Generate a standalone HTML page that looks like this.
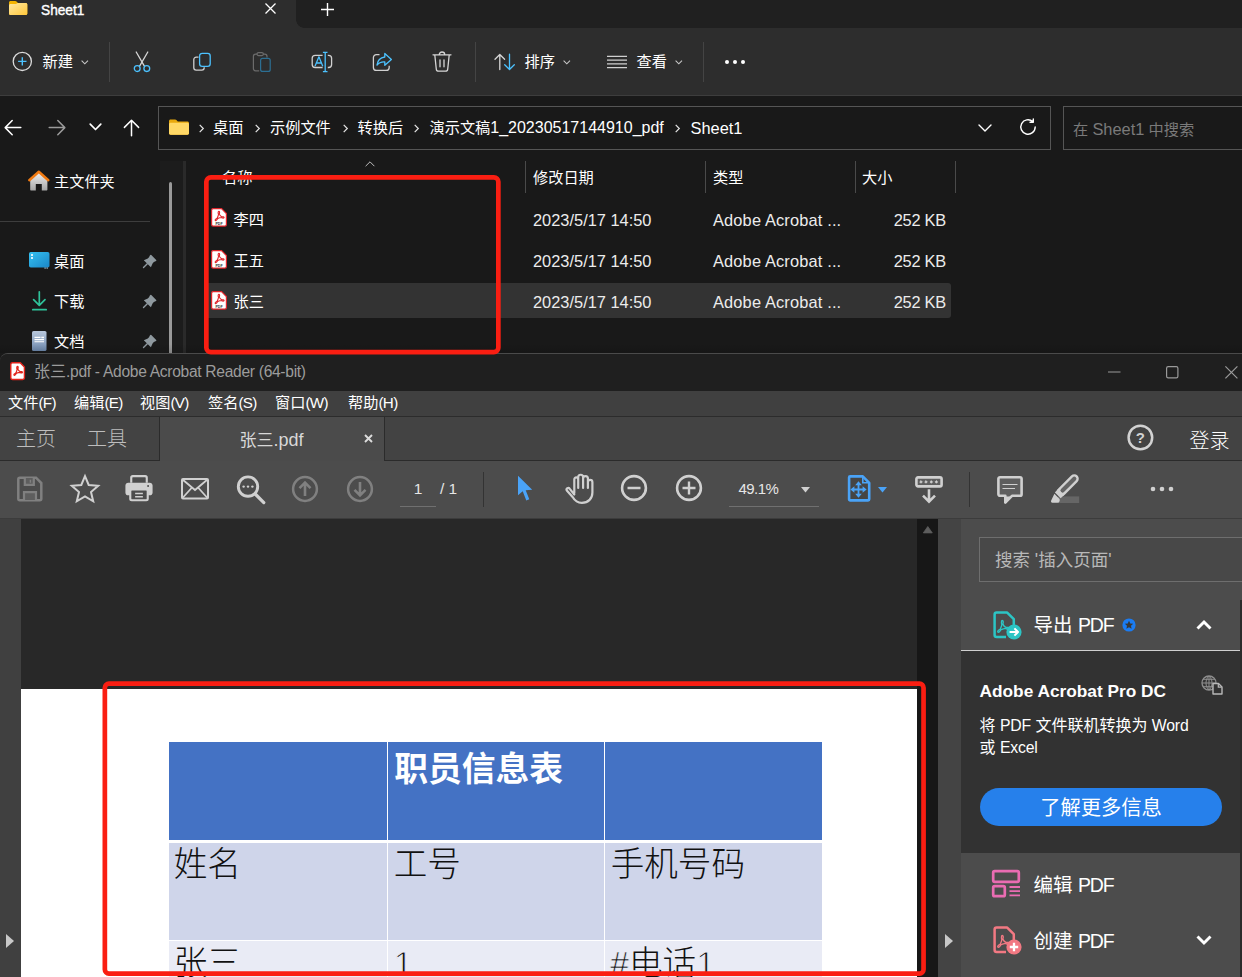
<!DOCTYPE html>
<html lang="zh-CN">
<head>
<meta charset="utf-8">
<title>Sheet1</title>
<style>
*{box-sizing:border-box;margin:0;padding:0}
html,body{width:1242px;height:977px;overflow:hidden;background:#191919}
body{position:relative;font-family:"Liberation Sans","Noto Sans CJK SC",sans-serif;color:#fff;font-size:15px;-webkit-font-smoothing:antialiased}
.abs{position:absolute}
.t{position:absolute;white-space:nowrap;line-height:20px;height:20px}
svg{position:absolute;overflow:visible}
/* ---------- Explorer ---------- */
#ex{position:absolute;left:0;top:0;width:1242px;height:353px;background:#191919;overflow:hidden}
#ex-title{position:absolute;left:0;top:0;width:1242px;height:28px;background:#202020}
#ex-tab{position:absolute;left:0;top:-8px;width:296px;height:36px;background:#2d2d2d;border-radius:0 8px 0 0}
#ex-tool{position:absolute;left:0;top:28px;width:1242px;height:68px;background:#2d2d2d;border-bottom:1px solid #3d3d3d}
.vsep{position:absolute;width:1px;background:#444}
#addr{position:absolute;left:158px;top:106px;width:893px;height:44px;border:1px solid #555;background:#191919}
#srch{position:absolute;left:1063px;top:106px;width:200px;height:44px;border:1px solid #555;background:#191919}
.l{font-size:16.400px}
.crumb{font-size:17px;color:#e0e0e0;width:10px;text-align:center}
.hsep{top:161px;width:1px;height:32px;background:#4a4a4a}
/* ---------- Acrobat ---------- */
#ac{position:absolute;left:0;top:353px;width:1242px;height:624px;background:#272727;overflow:hidden;border-top:1px solid #4a4a4a;border-radius:8px 0 0 0}
.menu{top:39px;font-size:15.200px;color:#fff}
.ml{font-size:15.200px;letter-spacing:-.6px}
.pg{font-size:33.600px;font-weight:300;color:#111;line-height:40px;height:40px}
.big{font-size:19.500px;line-height:24px;height:24px}
.bl{font-size:19.500px;letter-spacing:-1.100px}
.dl{font-size:15.800px;letter-spacing:-.2px}
.thin{-webkit-text-stroke:1px #e9ebf5}
</style>
</head>
<body>
<!-- ================= EXPLORER ================= -->
<div id="ex">
  <div id="ex-title"></div>
  <div id="ex-tab"></div>
  <div class="abs" style="left:296px;top:20px;width:8px;height:8px;background:radial-gradient(circle at 100% 0,#202020 7.5px,#2d2d2d 8px)"></div>
  <!-- tab folder icon -->
  <svg style="left:9px;top:1px" width="19" height="15" viewBox="0 0 19 15">
    <defs><linearGradient id="gf" x1="0" y1="0" x2="1" y2="1"><stop offset="0" stop-color="#ffe9a2"/><stop offset="1" stop-color="#ffc73a"/></linearGradient></defs>
    <path d="M0 1.500C0 .7.700 0 1.500 0h4.800c.5 0 .9.200 1.200.5L9 2h7.800c.8 0 1.500.7 1.500 1.500v9c0 .8-.7 1.500-1.500 1.500H1.500C.7 14 0 13.300 0 12.500z" fill="#f4b400"/>
    <path d="M0 4.600c0-.8.700-1.500 1.500-1.500h5.200c.5 0 .9-.2 1.200-.5l.6-.6h8.300c.8 0 1.500.7 1.500 1.500v9c0 .8-.7 1.500-1.500 1.500H1.500C.7 14 0 13.300 0 12.500z" fill="url(#gf)"/>
  </svg>
  <div class="t" style="left:40.500px;top:-.200px;font-size:14.800px;-webkit-text-stroke:.4px #fff;transform:scaleX(.925);transform-origin:0 50%">Sheet1</div>
  <svg style="left:265px;top:3px" width="11" height="11" viewBox="0 0 11 11"><path d="M.5.5l10 10M10.500.5l-10 10" stroke="#fff" stroke-width="1.300" fill="none"/></svg>
  <svg style="left:321px;top:3px" width="13" height="13" viewBox="0 0 13 13"><path d="M6.500 0v13M0 6.500h13" stroke="#fff" stroke-width="1.400" fill="none"/></svg>

  <div id="ex-tool"></div>
  <!-- new -->
  <svg style="left:12px;top:51px" width="21" height="21" viewBox="0 0 21 21"><circle cx="10.300" cy="10.400" r="9.100" fill="none" stroke="#dcdcdc" stroke-width="1.300"/><path d="M10.300 6.200v8.400M6.100 10.400h8.400" stroke="#4cc2ff" stroke-width="1.400" fill="none"/></svg>
  <div class="t" style="left:42.500px;top:52px;font-size:15.200px">新建</div>
  <svg style="left:80.500px;top:60px" width="8" height="5" viewBox="0 0 8 5"><path d="M.6.600L3.800 3.800 7 .6" stroke="#c8c8c8" stroke-width="1.100" fill="none"/></svg>
  <div class="vsep" style="left:109px;top:42px;height:40px"></div>
  <!-- cut -->
  <svg style="left:132px;top:51px" width="20" height="22" viewBox="0 0 20 22">
    <path d="M4.200 1L12.400 15.200M15.800 1L7.600 15.200" stroke="#d6d6d6" stroke-width="1.300" fill="none" stroke-linecap="round"/>
    <circle cx="5.200" cy="17.600" r="2.900" fill="none" stroke="#4cc2ff" stroke-width="1.300"/><circle cx="14.800" cy="17.600" r="2.900" fill="none" stroke="#4cc2ff" stroke-width="1.300"/>
  </svg>
  <!-- copy -->
  <svg style="left:192px;top:52px" width="20" height="20" viewBox="0 0 20 20">
    <path d="M6.500 5.200H4.200c-1.300 0-2.400 1.100-2.400 2.400v8.200c0 1.300 1.100 2.400 2.400 2.400h5.600c1.300 0 2.400-1.100 2.400-2.400v-.6" fill="none" stroke="#d0d0d0" stroke-width="1.300"/>
    <rect x="7.600" y="1.300" width="10.600" height="13" rx="2.600" fill="none" stroke="#4cc2ff" stroke-width="1.300"/>
  </svg>
  <!-- paste (disabled) -->
  <svg style="left:252px;top:51px" width="20" height="22" viewBox="0 0 20 22">
    <path d="M5 3.200H3.600c-1.200 0-2.200 1-2.200 2.200v12.200c0 1.200 1 2.200 2.200 2.200h3.600M11.400 3.200h1.400c1.200 0 2.200 1 2.200 2.200v1" fill="none" stroke="#6b6b6b" stroke-width="1.200"/>
    <rect x="5" y="1.600" width="6.400" height="3" rx="1.500" fill="none" stroke="#6b6b6b" stroke-width="1.200"/>
    <rect x="8.600" y="7.400" width="9.600" height="13" rx="2" fill="none" stroke="#2c6f93" stroke-width="1.200"/>
  </svg>
  <!-- rename -->
  <svg style="left:311px;top:51px" width="22" height="22" viewBox="0 0 22 22">
    <path d="M11.600 4.300H4.200c-1.700 0-3 1.300-3 3v6.200c0 1.700 1.300 3 3 3h7.400M16.800 4.300h.8c1.700 0 3 1.300 3 3v6.200c0 1.700-1.300 3-3 3h-.8" fill="none" stroke="#d0d0d0" stroke-width="1.300"/>
    <path d="M14.200 1.300v19.400M11.900 1.300h4.600M11.900 20.700h4.600" stroke="#4cc2ff" stroke-width="1.300" fill="none"/>
    <path d="M4 15.200L7.900 5.800l3.900 9.400M5.400 12h5" stroke="#4cc2ff" stroke-width="1.300" fill="none" stroke-linejoin="round"/>
  </svg>
  <!-- share -->
  <svg style="left:372px;top:52px" width="21" height="20" viewBox="0 0 21 20">
    <path d="M7.500 2.600H4.400c-1.700 0-3 1.300-3 3v9.800c0 1.700 1.300 3 3 3h9.800c1.700 0 3-1.300 3-3v-1.600" fill="none" stroke="#d0d0d0" stroke-width="1.300"/>
    <path d="M12.800 1.500l6.600 5.900-6.600 5.900v-3.500c-3.500-.2-6 .8-7.800 3.300.5-4.400 3.100-7.500 7.800-8.100z" fill="none" stroke="#4cc2ff" stroke-width="1.300" stroke-linejoin="round"/>
  </svg>
  <!-- delete -->
  <svg style="left:432px;top:51px" width="20" height="22" viewBox="0 0 20 22">
    <path d="M1 3.800h18M7.300 3.600c0-1.500 1.200-2.600 2.700-2.600s2.700 1.100 2.700 2.600" fill="none" stroke="#d6d6d6" stroke-width="1.300" stroke-linecap="round"/>
    <path d="M2.800 4l1.500 14.200c.1 1.200 1.100 2 2.300 2h6.800c1.200 0 2.200-.8 2.300-2L17.200 4" fill="none" stroke="#d6d6d6" stroke-width="1.300"/>
    <path d="M8 8.800v7M12 8.800v7" stroke="#d6d6d6" stroke-width="1.300" stroke-linecap="round"/>
  </svg>
  <div class="vsep" style="left:475px;top:42px;height:40px"></div>
  <!-- sort -->
  <svg style="left:494px;top:53px" width="22" height="18" viewBox="0 0 22 18">
    <path d="M5.800 16.500V1.500M1 6.300l4.800-4.800 4.800 4.800" fill="none" stroke="#d6d6d6" stroke-width="1.300" stroke-linecap="round" stroke-linejoin="round"/>
    <path d="M15.500 1.200v15M10.700 11.700l4.800 4.800 4.800-4.800" fill="none" stroke="#4cc2ff" stroke-width="1.300" stroke-linecap="round" stroke-linejoin="round"/>
  </svg>
  <div class="t" style="left:524.500px;top:52px;font-size:15.200px">排序</div>
  <svg style="left:562.500px;top:60px" width="8" height="5" viewBox="0 0 8 5"><path d="M.6.600L3.800 3.800 7 .6" stroke="#c8c8c8" stroke-width="1.100" fill="none"/></svg>
  <!-- view -->
  <svg style="left:607px;top:55px" width="20" height="14" viewBox="0 0 20 14"><path d="M0 1.300h20M0 5.100h20M0 8.900h20M0 12.700h20" stroke="#d0d0d0" stroke-width="1.200"/></svg>
  <div class="t" style="left:636.500px;top:52px;font-size:15.200px">查看</div>
  <svg style="left:674.500px;top:60px" width="8" height="5" viewBox="0 0 8 5"><path d="M.6.600L3.800 3.800 7 .6" stroke="#c8c8c8" stroke-width="1.100" fill="none"/></svg>
  <div class="vsep" style="left:703px;top:42px;height:40px"></div>
  <svg style="left:724px;top:59px" width="22" height="6" viewBox="0 0 22 6"><circle cx="3" cy="3" r="2" fill="#fff"/><circle cx="11" cy="3" r="2" fill="#fff"/><circle cx="19" cy="3" r="2" fill="#fff"/></svg>
  <!-- nav arrows -->
  <svg style="left:4px;top:119px" width="18" height="17" viewBox="0 0 18 17"><path d="M16.800 8.600H1.500M8.200 1.500L1.200 8.600l7 7.100" fill="none" stroke="#fff" stroke-width="1.500" stroke-linecap="round" stroke-linejoin="round"/></svg>
  <svg style="left:48px;top:119px" width="18" height="17" viewBox="0 0 18 17"><path d="M1.200 8.600h15.300M9.800 1.500l7 7.100-7 7.100" fill="none" stroke="#9b9b9b" stroke-width="1.500" stroke-linecap="round" stroke-linejoin="round"/></svg>
  <svg style="left:89px;top:123px" width="13" height="8" viewBox="0 0 13 8"><path d="M1.200 1.200l5.300 5.300 5.300-5.300" fill="none" stroke="#fff" stroke-width="1.700" stroke-linecap="round" stroke-linejoin="round"/></svg>
  <svg style="left:123px;top:119px" width="17" height="18" viewBox="0 0 17 18"><path d="M8.500 16.800V1.500M1.400 8.400l7.100-7.100 7.100 7.100" fill="none" stroke="#fff" stroke-width="1.500" stroke-linecap="round" stroke-linejoin="round"/></svg>
  <div id="addr"></div>
  <svg style="left:169px;top:119px" width="20" height="16" viewBox="0 0 20 16">
    <path d="M0 2.200C0 1.300.7.600 1.600.6h4.500c.5 0 1 .2 1.300.5l1.400 1.400h9.600c.9 0 1.600.7 1.600 1.600v10c0 .9-.7 1.600-1.600 1.600H1.600c-.9 0-1.600-.7-1.600-1.600z" fill="#e8a90e"/>
    <path d="M0 5.400c0-.9.700-1.600 1.600-1.600h16.800c.9 0 1.600.7 1.600 1.600v8.700c0 .9-.7 1.600-1.600 1.600H1.600c-.9 0-1.600-.7-1.600-1.600z" fill="#ffd866"/>
  </svg>
  <svg style="left:198.5px;top:123.500px" width="5" height="9" viewBox="0 0 5 9"><path d="M.7.800L4.300 4.500.7 8.200" fill="none" stroke="#e4e4e4" stroke-width="1.200"/></svg>
  <div class="t" style="left:213px;top:117.500px;font-size:15.200px">桌面</div>
  <svg style="left:255.0px;top:123.500px" width="5" height="9" viewBox="0 0 5 9"><path d="M.7.800L4.300 4.500.7 8.200" fill="none" stroke="#e4e4e4" stroke-width="1.200"/></svg>
  <div class="t" style="left:270px;top:117.500px;font-size:15.200px">示例文件</div>
  <svg style="left:342.5px;top:123.500px" width="5" height="9" viewBox="0 0 5 9"><path d="M.7.800L4.300 4.500.7 8.200" fill="none" stroke="#e4e4e4" stroke-width="1.200"/></svg>
  <div class="t" style="left:357.500px;top:117.500px;font-size:15.200px">转换后</div>
  <svg style="left:413.5px;top:123.500px" width="5" height="9" viewBox="0 0 5 9"><path d="M.7.800L4.300 4.500.7 8.200" fill="none" stroke="#e4e4e4" stroke-width="1.200"/></svg>
  <div class="t" style="left:429.500px;top:117.500px;font-size:15.200px">演示文稿<span style="font-size:16px">1_20230517144910_pdf</span></div>
  <svg style="left:674.5px;top:123.500px" width="5" height="9" viewBox="0 0 5 9"><path d="M.7.800L4.300 4.500.7 8.200" fill="none" stroke="#e4e4e4" stroke-width="1.200"/></svg>
  <div class="t" style="left:690.500px;top:117.500px;font-size:16.400px">Sheet1</div>
  <svg style="left:978px;top:124px" width="14" height="8" viewBox="0 0 14 8"><path d="M1 1l6 6 6-6" fill="none" stroke="#fff" stroke-width="1.400" stroke-linecap="round" stroke-linejoin="round"/></svg>
  <svg style="left:1019px;top:118px" width="18" height="18" viewBox="0 0 18 18"><path d="M16.200 9a7.200 7.200 0 1 1-2.400-5.400M14.300.9v3.300h-3.300" fill="none" stroke="#fff" stroke-width="1.400" stroke-linecap="round" stroke-linejoin="round"/></svg>
  <div id="srch"></div>
  <div class="t" style="left:1073px;top:119px;font-size:15.200px;color:#7a7a7a">在 <span class="l">Sheet1</span> 中搜索</div>

  <!-- nav pane -->
  <div class="abs" style="left:160px;top:161px;width:24px;height:200px;background:#1c1c1c"></div>
  <div class="abs" style="left:182.500px;top:161px;width:3px;height:200px;background:#2a2a2a"></div>
  <div class="abs" style="left:169px;top:182px;width:3px;height:180px;background:#9a9a9a;border-radius:2px"></div>
  <div class="abs" style="left:0;top:221px;width:150px;height:1px;background:#3d3d3d"></div>
  <!-- home -->
  <svg style="left:28px;top:170px" width="22" height="21" viewBox="0 0 22 21">
    <defs><linearGradient id="gh" x1="0" y1="0" x2="0" y2="1"><stop offset="0" stop-color="#f2f2f2"/><stop offset="1" stop-color="#a6a6a6"/></linearGradient></defs>
    <path d="M2.200 9.500L10.800 2l8.600 7.500v10c0 .6-.4 1-1 1h-4.600v-6.500H7.800v6.500H3.200c-.6 0-1-.4-1-1z" fill="url(#gh)"/>
    <path d="M1.300 10.200L10.800 1.800l9.500 8.400" fill="none" stroke="#f07a12" stroke-width="2.500" stroke-linecap="round" stroke-linejoin="round"/>
  </svg>
  <div class="t" style="left:54px;top:171.500px;font-size:15.200px">主文件夹</div>
  <!-- desktop -->
  <svg style="left:29px;top:252px" width="21" height="17" viewBox="0 0 21 17">
    <defs><linearGradient id="gd" x1="0" y1="0" x2="1" y2="1"><stop offset="0" stop-color="#35c1f1"/><stop offset="1" stop-color="#1a86c8"/></linearGradient></defs>
    <rect x="0" y="0" width="20.500" height="15.500" rx="1.800" fill="url(#gd)"/>
    <rect x="2" y="2.200" width="2" height="1.600" fill="#fff"/><rect x="2" y="5.200" width="2" height="1.600" fill="#fff"/>
    <rect x="15.500" y="15.600" width="1.200" height="1" fill="#cfe9f7"/><rect x="17.600" y="15.600" width="1.200" height="1" fill="#cfe9f7"/>
  </svg>
  <div class="t" style="left:54px;top:251.500px;font-size:15.200px">桌面</div>
  <!-- download -->
  <svg style="left:32px;top:291px" width="15" height="20" viewBox="0 0 15 20"><path d="M7.300.8v13.400M1.600 8.700l5.700 5.700L13 8.700" fill="none" stroke="#2fc29a" stroke-width="1.700" stroke-linecap="round" stroke-linejoin="round"/><path d="M.8 18.700h13.400" stroke="#2fc29a" stroke-width="1.700" stroke-linecap="round"/></svg>
  <div class="t" style="left:54px;top:291.500px;font-size:15.200px">下载</div>
  <!-- documents -->
  <svg style="left:32px;top:331px" width="15" height="21" viewBox="0 0 15 21">
    <defs><linearGradient id="gdoc" x1="0" y1="0" x2="0" y2="1"><stop offset="0" stop-color="#b9c8dc"/><stop offset="1" stop-color="#6f8bb0"/></linearGradient></defs>
    <rect x="0" y="0" width="14.500" height="20" rx="1.600" fill="url(#gdoc)"/>
    <path d="M2.500 6.400h6M2.500 8.600h9.500M2.500 10.800h9.500" stroke="#fff" stroke-width="1.100"/><rect x="9.300" y="5.700" width="2.700" height="1.500" fill="#fff"/>
  </svg>
  <div class="t" style="left:54px;top:331.500px;font-size:15.200px">文档</div>
  <svg style="left:142px;top:254px" width="15" height="15" viewBox="0 0 15 15"><path d="M9.300 1L14.200 5.900Q14.700 6.600 14 7.100L11.900 8 10.700 9.300 8.900 13.300 1.800 6.200 5.800 4.500 7 3.200 8 1.200Q8.700.6 9.300 1z" fill="#8f999f"/><path d="M5.300 9.800L1.500 13.600" stroke="#8f999f" stroke-width="1.400" stroke-linecap="round"/></svg>
  <svg style="left:142px;top:294px" width="15" height="15" viewBox="0 0 15 15"><path d="M9.300 1L14.200 5.900Q14.700 6.600 14 7.100L11.900 8 10.700 9.300 8.900 13.300 1.800 6.200 5.800 4.500 7 3.200 8 1.200Q8.700.6 9.300 1z" fill="#8f999f"/><path d="M5.300 9.800L1.500 13.600" stroke="#8f999f" stroke-width="1.400" stroke-linecap="round"/></svg>
  <svg style="left:142px;top:334px" width="15" height="15" viewBox="0 0 15 15"><path d="M9.300 1L14.200 5.900Q14.700 6.600 14 7.100L11.900 8 10.700 9.300 8.900 13.300 1.800 6.200 5.800 4.500 7 3.200 8 1.200Q8.700.6 9.300 1z" fill="#8f999f"/><path d="M5.300 9.800L1.500 13.600" stroke="#8f999f" stroke-width="1.400" stroke-linecap="round"/></svg>
  <!-- list header -->
  <svg style="left:365px;top:161px" width="10" height="6" viewBox="0 0 10 6"><path d="M.6 5.200L5 .8l4.400 4.400" fill="none" stroke="#bdbdbd" stroke-width="1"/></svg>
  <div class="t" style="left:222px;top:168px;font-size:15.200px">名称</div>
  <div class="t" style="left:533px;top:168px;font-size:15.200px">修改日期</div>
  <div class="t" style="left:713px;top:168px;font-size:15.200px">类型</div>
  <div class="t" style="left:862px;top:168px;font-size:15.200px">大小</div>
  <div class="abs hsep" style="left:525px"></div><div class="abs hsep" style="left:705px"></div><div class="abs hsep" style="left:855px"></div><div class="abs hsep" style="left:955px"></div>
  <div class="abs" style="left:205px;top:283px;width:746px;height:35px;background:#333;border-radius:3px"></div>
<svg style="left:211px;top:208px" width="16" height="19" viewBox="0 0 16 19">
    <path d="M2.200.6h8.300l4.900 4.900v11c0 .9-.7 1.600-1.600 1.600H2.200c-.9 0-1.600-.7-1.600-1.600V2.200C.6 1.300 1.300.6 2.200.6z" fill="#fff" stroke="#e0252b" stroke-width="1.200"/>
    <path d="M7.800 3.200c.9 0 1 1.300.5 2.900.5 1.200 1.400 2.100 2.400 2.600 1.300-.1 2.400.1 2.400.8 0 .8-1.300.8-2.600 0-1.300.1-2.600.5-3.700 1-.8 1.400-1.700 2.400-2.400 2-.7-.5.100-1.500 1.700-2.300.6-1.100 1.100-2.400 1.400-3.600-.5-1.500-.5-3.400.3-3.400z" fill="none" stroke="#e0252b" stroke-width="1.100" stroke-linejoin="round"/>
    <text x="8" y="16.600" font-size="3.600" font-weight="bold" fill="#333" text-anchor="middle" font-family="Liberation Sans,sans-serif">PDF</text>
  </svg>
  <div class="t" style="left:233.500px;top:209.5px;font-size:15.200px">李四</div>
  <div class="t" style="left:533px;top:209.5px;font-size:16.400px;color:#ececec">2023/5/17 14:50</div>
  <div class="t" style="left:713px;top:209.5px;font-size:16.400px;color:#ececec;letter-spacing:.15px">Adobe Acrobat ...</div>
  <div class="t" style="left:846px;width:100px;text-align:right;top:209.5px;font-size:16.400px;letter-spacing:-.25px;color:#ececec">252 KB</div>
<svg style="left:211px;top:250px" width="16" height="19" viewBox="0 0 16 19">
    <path d="M2.200.6h8.300l4.900 4.900v11c0 .9-.7 1.600-1.600 1.600H2.200c-.9 0-1.600-.7-1.600-1.600V2.200C.6 1.300 1.300.6 2.200.6z" fill="#fff" stroke="#e0252b" stroke-width="1.200"/>
    <path d="M7.800 3.200c.9 0 1 1.300.5 2.900.5 1.200 1.400 2.100 2.400 2.600 1.300-.1 2.400.1 2.400.8 0 .8-1.300.8-2.600 0-1.300.1-2.600.5-3.700 1-.8 1.400-1.700 2.400-2.400 2-.7-.5.100-1.500 1.700-2.300.6-1.100 1.100-2.400 1.400-3.600-.5-1.500-.5-3.400.3-3.400z" fill="none" stroke="#e0252b" stroke-width="1.100" stroke-linejoin="round"/>
    <text x="8" y="16.600" font-size="3.600" font-weight="bold" fill="#333" text-anchor="middle" font-family="Liberation Sans,sans-serif">PDF</text>
  </svg>
  <div class="t" style="left:233.500px;top:251px;font-size:15.200px">王五</div>
  <div class="t" style="left:533px;top:251px;font-size:16.400px;color:#ececec">2023/5/17 14:50</div>
  <div class="t" style="left:713px;top:251px;font-size:16.400px;color:#ececec;letter-spacing:.15px">Adobe Acrobat ...</div>
  <div class="t" style="left:846px;width:100px;text-align:right;top:251px;font-size:16.400px;letter-spacing:-.25px;color:#ececec">252 KB</div>
<svg style="left:211px;top:291px" width="16" height="19" viewBox="0 0 16 19">
    <path d="M2.200.6h8.300l4.900 4.900v11c0 .9-.7 1.600-1.600 1.600H2.200c-.9 0-1.600-.7-1.600-1.600V2.200C.6 1.300 1.300.6 2.200.6z" fill="#fff" stroke="#e0252b" stroke-width="1.200"/>
    <path d="M7.800 3.200c.9 0 1 1.300.5 2.900.5 1.200 1.400 2.100 2.400 2.600 1.300-.1 2.400.1 2.400.8 0 .8-1.300.8-2.600 0-1.300.1-2.600.5-3.700 1-.8 1.400-1.700 2.400-2.400 2-.7-.5.100-1.500 1.700-2.300.6-1.100 1.100-2.400 1.400-3.600-.5-1.500-.5-3.400.3-3.400z" fill="none" stroke="#e0252b" stroke-width="1.100" stroke-linejoin="round"/>
    <text x="8" y="16.600" font-size="3.600" font-weight="bold" fill="#333" text-anchor="middle" font-family="Liberation Sans,sans-serif">PDF</text>
  </svg>
  <div class="t" style="left:233.500px;top:292px;font-size:15.200px">张三</div>
  <div class="t" style="left:533px;top:292px;font-size:16.400px;color:#ececec">2023/5/17 14:50</div>
  <div class="t" style="left:713px;top:292px;font-size:16.400px;color:#ececec;letter-spacing:.15px">Adobe Acrobat ...</div>
  <div class="t" style="left:846px;width:100px;text-align:right;top:292px;font-size:16.400px;letter-spacing:-.25px;color:#ececec">252 KB</div>

  <div class="abs" style="left:0;top:344px;width:1242px;height:9px;background:linear-gradient(to bottom,rgba(0,0,0,0),rgba(0,0,0,.14))"></div>
</div>
<!-- ================= ACROBAT ================= -->
<div id="ac">
  <!-- title bar -->
  <div class="abs" style="left:0;top:0;width:1242px;height:37px;background:#1f1f1f"></div>
  <svg style="left:10.300px;top:8.200px" width="15.200" height="19" viewBox="0 0 16 20">
    <path d="M2.600.8h8.200l4.400 4.400v11.400c0 1-.8 1.800-1.800 1.800H2.600c-1 0-1.800-.8-1.800-1.800V2.600c0-1 .8-1.800 1.800-1.800z" fill="#fff" stroke="#e2231a" stroke-width="1.500"/>
    <path d="M7.800 4.600c.9 0 1 1.300.5 2.900.5 1.200 1.400 2.100 2.400 2.600 1.300-.1 2.400.1 2.400.8 0 .8-1.300.8-2.600 0-1.300.1-2.600.5-3.700 1-.8 1.400-1.700 2.400-2.400 2-.7-.5.100-1.500 1.700-2.300.6-1.100 1.100-2.400 1.400-3.600-.5-1.500-.5-3.400.3-3.400z" fill="none" stroke="#e2231a" stroke-width="1.300" stroke-linejoin="round"/>
  </svg>
  <div class="t" style="left:34px;top:8px;font-size:16px;color:#9c9c9c">张三<span style="font-size:15.600px;letter-spacing:-.3px">.pdf - Adobe Acrobat Reader (64-bit)</span></div>
  <svg style="left:1108px;top:17px" width="13" height="2" viewBox="0 0 13 2"><path d="M0 1h12.500" stroke="#9a9a9a" stroke-width="1.200"/></svg>
  <svg style="left:1166px;top:12px" width="13" height="13" viewBox="0 0 13 13"><rect x=".6" y=".6" width="11.300" height="11.300" rx="1.600" fill="none" stroke="#9a9a9a" stroke-width="1.200"/></svg>
  <svg style="left:1225px;top:12px" width="13" height="13" viewBox="0 0 13 13"><path d="M.4.400l12 12M12.400.4l-12 12" stroke="#9a9a9a" stroke-width="1.200" fill="none"/></svg>
  <!-- menu bar -->
  <div class="abs" style="left:0;top:37px;width:1242px;height:25px;background:#404040"></div>
  <div class="abs" style="left:0;top:62px;width:1242px;height:1px;background:#2c2c2c"></div>
  <div class="t menu" style="left:8px">文件<span class="ml">(F)</span></div>
  <div class="t menu" style="left:74px">编辑<span class="ml">(E)</span></div>
  <div class="t menu" style="left:140px">视图<span class="ml">(V)</span></div>
  <div class="t menu" style="left:208px">签名<span class="ml">(S)</span></div>
  <div class="t menu" style="left:275px">窗口<span class="ml">(W)</span></div>
  <div class="t menu" style="left:348px">帮助<span class="ml">(H)</span></div>
  <!-- tab bar -->
  <div class="abs" style="left:0;top:63px;width:1242px;height:43px;background:#434343"></div>
  <div class="abs" style="left:0;top:106px;width:1242px;height:1px;background:#2b2b2b"></div>
  <div class="abs" style="left:159px;top:63px;width:226px;height:45px;background:#4b4b4b;border-left:1px solid #2b2b2b;border-right:1px solid #2b2b2b"></div>
  <div class="t" style="left:16px;top:74px;font-size:20px;font-weight:300;color:#bdbdbd;line-height:22px;height:22px">主页</div>
  <div class="t" style="left:87px;top:74px;font-size:20px;font-weight:300;color:#bdbdbd;line-height:22px;height:22px">工具</div>
  <div class="t" style="left:239.500px;top:75px;font-size:17px;color:#d8d8d8;line-height:22px;height:22px">张三<span style="font-size:18px">.pdf</span></div>
  <svg style="left:363.700px;top:79.700px" width="9" height="9" viewBox="0 0 9 9"><path d="M1 1l7 7M8 1l-7 7" stroke="#dcdcdc" stroke-width="1.900" fill="none"/></svg>
  <svg style="left:1127px;top:70.300px" width="27" height="27" viewBox="0 0 27 27"><circle cx="13.400" cy="13.500" r="11.800" fill="none" stroke="#d2d2d2" stroke-width="2.500"/><text x="13.400" y="18.900" font-size="15" font-weight="bold" fill="#d2d2d2" text-anchor="middle" font-family="Liberation Sans,sans-serif">?</text></svg>
  <div class="t" style="left:1189.500px;top:76px;font-size:20px;font-weight:300;color:#fff;line-height:22px;height:22px">登录</div>
  <!-- toolbar -->
  <div class="abs" style="left:0;top:107px;width:1242px;height:57px;background:#4c4c4c"></div>
  <!-- save -->
  <svg style="left:17px;top:122px" width="26" height="26" viewBox="0 0 26 26">
    <path d="M2.800 1.700h16.200l5.300 5.300v15.800c0 .8-.7 1.500-1.500 1.500H2.800c-.8 0-1.500-.7-1.500-1.500V3.200c0-.8.700-1.500 1.500-1.500z" fill="none" stroke="#808080" stroke-width="2.500"/>
    <path d="M7.800 2v6.800h9V2" fill="#5e5e5e" stroke="#808080" stroke-width="2.200"/><path d="M13.400 3.800v3" stroke="#808080" stroke-width="1.400"/>
    <path d="M7 24v-7.800h12V24" fill="#5e5e5e" stroke="#808080" stroke-width="2.200"/>
  </svg>
  <!-- star -->
  <svg style="left:70px;top:120px" width="30" height="29" viewBox="0 0 30 29"><path d="M15 2.200l3.700 8.800 9.500.8-7.200 6.200 2.200 9.300L15 22.400l-8.200 4.900L9 18 1.800 11.800l9.500-.8z" fill="none" stroke="#d0d0d0" stroke-width="2" stroke-linejoin="miter"/></svg>
  <!-- print -->
  <svg style="left:125px;top:120.800px" width="28" height="26.200" viewBox="0 0 28 27">
    <path d="M6 8V2.800c0-.9.700-1.600 1.600-1.600h12.800c.9 0 1.600.7 1.600 1.600V8" fill="none" stroke="#d0d0d0" stroke-width="2.200"/>
    <path d="M2.800 8h22.400c1.500 0 2.800 1.300 2.800 2.800v7.400c0 1.500-1.300 2.800-2.800 2.800H23v-6H5v6H2.800C1.300 21 0 19.700 0 18.200v-7.400C0 9.300 1.300 8 2.800 8z" fill="#d0d0d0"/>
    <rect x="5" y="15" width="18" height="11" rx="1.500" fill="none" stroke="#d0d0d0" stroke-width="2.200"/>
    <path d="M10 19h8M10 22.500h8" stroke="#d0d0d0" stroke-width="1.600"/><circle cx="23.400" cy="11.400" r="1" fill="#4b4b4b"/>
  </svg>
  <!-- mail -->
  <svg style="left:181px;top:123.5px" width="28" height="22" viewBox="0 0 28 22"><rect x="1" y="1" width="26" height="19.500" rx="1" fill="none" stroke="#d0d0d0" stroke-width="2"/><path d="M1.500 1.500L14 12 26.500 1.500M1.500 20L11 9.500M26.500 20L17 9.500" fill="none" stroke="#d0d0d0" stroke-width="1.800"/></svg>
  <!-- search -->
  <svg style="left:236px;top:121px" width="30" height="29" viewBox="0 0 30 29"><circle cx="12" cy="11.600" r="9.700" fill="none" stroke="#d0d0d0" stroke-width="2.900"/><path d="M19.200 19l8.600 8.600" stroke="#d0d0d0" stroke-width="3.200" stroke-linecap="round"/><circle cx="7.600" cy="11.600" r="1.200" fill="#d0d0d0"/><circle cx="12" cy="11.600" r="1.200" fill="#d0d0d0"/><circle cx="16.400" cy="11.600" r="1.200" fill="#d0d0d0"/></svg>
  <!-- up / down -->
  <svg style="left:291px;top:121px" width="28" height="28" viewBox="0 0 28 28"><circle cx="14" cy="14" r="11.900" fill="none" stroke="#808080" stroke-width="2.500"/><path d="M14 21V8M8.500 13.200L14 7.700l5.500 5.500" fill="none" stroke="#808080" stroke-width="2.600"/></svg>
  <svg style="left:346px;top:121px" width="28" height="28" viewBox="0 0 28 28"><circle cx="14" cy="14" r="11.900" fill="none" stroke="#808080" stroke-width="2.500"/><path d="M14 7v13M8.500 14.800L14 20.300l5.500-5.500" fill="none" stroke="#808080" stroke-width="2.600"/></svg>
  <div class="t" style="left:400px;width:36px;text-align:center;top:125px;font-size:15.500px;color:#e6e6e6">1</div>
  <div class="abs" style="left:400px;top:151.5px;width:36px;height:1px;background:#707070"></div>
  <div class="t" style="left:440px;top:125px;font-size:15.500px;color:#e6e6e6">/ 1</div>
  <div class="abs" style="left:483px;top:118px;width:1px;height:35px;background:#333"></div>
  <!-- pointer -->
  <svg style="left:517px;top:121px" width="17" height="27" viewBox="0 0 17 27"><path d="M1 .8v19.500l4.700-4 3.600 9.200 3-1.200-3.600-9 6.500-.5z" fill="#4aa3f7"/></svg>
  <!-- hand -->
  <svg style="left:565px;top:120.400px" width="29" height="30" viewBox="0 0 29 30">
    <path d="M9.300 19V5.400a1.950 1.950 0 0 1 3.900 0V14M13.200 5.400V3.200a2.450 2.450 0 0 1 4.900 0V14M18.100 4.500a2.400 2.400 0 0 1 4.800 0V14M22.900 8.200a2.250 2.250 0 0 1 4.500 0V18.500c0 6-4 10.300-10.600 10.300-4.400 0-7-2-9-5.500L1.800 16.600c-1.100-2.100 1.600-3.700 3-1.700L9.300 20.500" fill="none" stroke="#d0d0d0" stroke-width="2.200" stroke-linejoin="round" stroke-linecap="round"/>
  </svg>
  <!-- minus / plus -->
  <svg style="left:620px;top:120px" width="28" height="28" viewBox="0 0 28 28"><circle cx="14" cy="14" r="11.900" fill="none" stroke="#d0d0d0" stroke-width="2.600"/><path d="M7.500 14h13" stroke="#d0d0d0" stroke-width="2.600"/></svg>
  <svg style="left:675px;top:120px" width="28" height="28" viewBox="0 0 28 28"><circle cx="14" cy="14" r="11.900" fill="none" stroke="#d0d0d0" stroke-width="2.600"/><path d="M7.500 14h13M14 7.500v13" stroke="#d0d0d0" stroke-width="2.400"/></svg>
  <div class="t" style="left:738.500px;top:125px;font-size:15px;color:#e6e6e6;letter-spacing:-.55px">49.1%</div>
  <div class="abs" style="left:729px;top:151.5px;width:90px;height:1px;background:#707070"></div>
  <svg style="left:800.500px;top:132.5px" width="9" height="6" viewBox="0 0 9 6"><path d="M0 0h9L4.500 5.500z" fill="#d0d0d0"/></svg>
  <!-- fit page -->
  <svg style="left:847px;top:120px" width="25" height="29" viewBox="0 0 25 29">
    <path d="M3.200 2.400h12.600l6.400 6.400v16.500c0 .6-.5 1.100-1.100 1.100H3.200c-.6 0-1.100-.5-1.100-1.100V3.500c0-.6.500-1.100 1.100-1.100z" fill="#454545" stroke="#4aa3f7" stroke-width="2.600" stroke-linejoin="round"/>
    <path d="M15.800 2.600v6.200h6.200" fill="none" stroke="#4aa3f7" stroke-width="1.600"/>
    <path d="M11.500 10v11M6 15.500h11" stroke="#4aa3f7" stroke-width="1.800"/>
    <path d="M11.500 7.300l3.300 4H8.200zM11.500 23.700l3.300-4H8.200zM3.400 15.500l4-3.300v6.600zM19.600 15.500l-4-3.300v6.600z" fill="#4aa3f7"/>
  </svg>
  <svg style="left:878px;top:132.500px" width="9" height="6" viewBox="0 0 9 6"><path d="M0 0h9L4.500 5.500z" fill="#4aa3f7"/></svg>
  <!-- keyboard-down -->
  <svg style="left:915px;top:122px" width="28" height="27" viewBox="0 0 28 27">
    <rect x="1.400" y="1.400" width="25.200" height="9" rx="1.600" fill="#5e5e5e" stroke="#d0d0d0" stroke-width="2.600"/>
    <path d="M6 4.500l1.400 1.400L6 7.300 4.600 5.900zM11 4.500l1.400 1.400L11 7.300 9.600 5.900zM16.300 4.500l1.400 1.400-1.400 1.400-1.400-1.400zM21.400 4.500l1.400 1.400-1.400 1.400L20 5.900z" fill="#d0d0d0" stroke="#d0d0d0" stroke-width=".6"/>
    <path d="M14 13.300v12M8 19.600l6 6 6-6" fill="none" stroke="#d0d0d0" stroke-width="2.600"/>
  </svg>
  <div class="abs" style="left:969px;top:118px;width:1px;height:35px;background:#333"></div>
  <!-- comment -->
  <svg style="left:997px;top:121px" width="27" height="29" viewBox="0 0 27 29">
    <path d="M3 2.200h20c.9 0 1.600.7 1.600 1.600v15.400c0 .9-.7 1.600-1.600 1.600H15l-6.700 6.800v-6.800H3c-.9 0-1.600-.7-1.600-1.600V3.800c0-.9.700-1.600 1.600-1.600z" fill="#5e5e5e" stroke="#d0d0d0" stroke-width="2.600" stroke-linejoin="round"/>
    <path d="M8.300 21.500v5.500l5.500-5.500z" fill="#d0d0d0"/>
    <path d="M5.500 9.500h15M5.500 13.500h12.500" stroke="#d0d0d0" stroke-width="1.100"/>
  </svg>
  <!-- pen -->
  <svg style="left:1050px;top:120px" width="30" height="30" viewBox="0 0 30 30">
    <rect x="8" y="22.400" width="21.200" height="6.600" fill="#666"/>
    <path d="M24.300 4.800L11.400 17.700" stroke="#d0d0d0" stroke-width="9" stroke-linecap="round" fill="none"/>
    <path d="M24.300 4.800L12.500 16.600" stroke="#646464" stroke-width="4.200" stroke-linecap="round" fill="none"/>
    <path d="M7.900 14.900l6.200 6.200-3.400 3.200-5.800-5.800z" fill="#d0d0d0"/>
    <path d="M4.400 19.700l5.200 5.200c.6 1.600-.3 3.600-2 3.900H2.400c-1.400-.3-1.800-1.600-1-2.900z" fill="#d0d0d0"/>
  </svg>
  <svg style="left:1150px;top:132px" width="24" height="6" viewBox="0 0 24 6"><circle cx="3" cy="3" r="2.300" fill="#d0d0d0"/><circle cx="12" cy="3" r="2.300" fill="#d0d0d0"/><circle cx="21" cy="3" r="2.300" fill="#d0d0d0"/></svg>

  <!-- document area -->
  <div class="abs" style="left:0;top:164px;width:21px;height:460px;background:#404040"></div>
  <svg style="left:6px;top:580px" width="8" height="14" viewBox="0 0 8 14"><path d="M0 0l8 7-8 7z" fill="#c8c8c8"/></svg>
  <div class="abs" style="left:21px;top:164px;width:896px;height:171px;background:#282828"></div>
  <div class="abs" style="left:21px;top:335px;width:896px;height:290px;background:#fff"></div>
  <div class="abs" style="left:917px;top:164px;width:21px;height:460px;background:#171717"></div>
  <svg style="left:922.500px;top:172px" width="10" height="8" viewBox="0 0 10 8"><path d="M4.800 .5l4.500 6.400H.3z" fill="#5e5e5e" stroke="#5e5e5e" stroke-width=".8" stroke-linejoin="round"/></svg>
  <div class="abs" style="left:938px;top:164px;width:23px;height:460px;background:#444"></div>
  <svg style="left:944.700px;top:580.200px" width="8" height="14" viewBox="0 0 8 14"><path d="M0 0l8 7-8 7z" fill="#c8c8c8"/></svg>
  <div class="abs" style="left:169px;top:388px;width:653px;height:98px;background:#4472c4"></div>
  <div class="abs" style="left:169px;top:489px;width:653px;height:97px;background:#cfd5ea"></div>
  <div class="abs" style="left:169px;top:587px;width:653px;height:40px;background:#e9ebf5"></div>
  <div class="abs" style="left:386.600px;top:388px;width:1.400px;height:240px;background:#fff"></div>
  <div class="abs" style="left:603.700px;top:388px;width:1.400px;height:240px;background:#fff"></div>
  <div class="t pg" style="left:394.2px;top:395px;font-weight:bold;color:#fff;font-size:33.800px">职员信息表</div>
  <div class="t pg" style="left:173.7px;top:490.8px">姓名</div>
  <div class="t pg" style="left:393.7px;top:490.8px">工号</div>
  <div class="t pg" style="left:610.7px;top:490.8px">手机号码</div>
  <div class="t pg" style="left:173.7px;top:589.8px">张三</div>
  <div class="t pg" style="left:393.7px;top:589.8px"><span class="thin">1</span></div>
  <div class="t pg" style="left:610.300px;top:589.8px"><span style="-webkit-text-stroke:.6px #e9ebf5">#</span>电话<span class="thin">1</span></div>
  
  <!-- right panel -->
  <div class="abs" style="left:961px;top:164px;width:281px;height:460px;background:#4c4c4c"></div>
  <div class="abs" style="left:0;top:164px;width:1242px;height:1px;background:#3c3c3c"></div>
  <div class="abs" style="left:979px;top:183px;width:280px;height:45px;border:1px solid #6e6e6e;background:#484848"></div>
  <div class="t" style="left:995px;top:195px;font-size:17.500px;color:#b8b8b8;line-height:22px;height:22px">搜索 '插入页面'</div>
  <div class="abs" style="left:1240px;top:246px;width:2px;height:380px;background:#2b2b2b"></div>
  <div class="abs" style="left:961px;top:296px;width:279px;height:1px;background:#d0d0d0"></div>
  <div class="abs" style="left:961px;top:297px;width:279px;height:202px;background:#323232"></div>
  <!-- export icon -->
  <svg style="left:993px;top:257px" width="29" height="29" viewBox="0 0 29 29">
    <path d="M13 26H3.600c-1.100 0-2-.9-2-2V3.600c0-1.100.9-2 2-2h10.600l6.600 6.600v6.300" fill="none" stroke="#2cc5c5" stroke-width="2.500" stroke-linejoin="round"/>
    <g transform="translate(-.5 5.500) scale(1.250)"><path d="M7.800 3.200c.9 0 1 1.300.5 2.900.5 1.200 1.400 2.100 2.400 2.600 1.300-.1 2.400.1 2.400.8 0 .8-1.300.8-2.600 0-1.300.1-2.600.5-3.700 1-.8 1.400-1.700 2.400-2.400 2-.7-.5.100-1.500 1.700-2.300.6-1.100 1.100-2.400 1.400-3.600-.5-1.500-.5-3.400.3-3.400z" fill="none" stroke="#2cc5c5" stroke-width="1.050" stroke-linejoin="round"/></g>
    <circle cx="21" cy="21" r="7.600" fill="#2cc5c5"/>
    <path d="M16.600 21h8M21.400 17.400l3.600 3.600-3.600 3.600" fill="none" stroke="#fff" stroke-width="2" stroke-linejoin="round"/>
  </svg>
  <div class="t big" style="left:1033.500px;top:259.200px">导出 <span class="bl">PDF</span></div>
  <svg style="left:1122px;top:264px" width="14" height="14" viewBox="0 0 14 14"><circle cx="7" cy="7" r="6.600" fill="#1b7cf2"/><path d="M7 2.800l1.250 2.700 2.950.3-2.200 2 .6 2.900L7 9.200l-2.600 1.500.6-2.900-2.200-2 2.950-.3z" fill="#383838"/></svg>
  <svg style="left:1196px;top:266px" width="16" height="10" viewBox="0 0 16 10"><path d="M1.500 8.500L8 2l6.500 6.500" fill="none" stroke="#fff" stroke-width="2.900"/></svg>
  <div class="t" style="left:979.500px;top:326px;font-size:17.300px;font-weight:bold;line-height:22px;height:22px;letter-spacing:0">Adobe Acrobat Pro DC</div>
  <svg style="left:1201px;top:321px" width="22" height="20" viewBox="0 0 22 20">
    <circle cx="8" cy="8" r="7" fill="none" stroke="#8e8e8e" stroke-width="1.300"/><path d="M1 8h14M8 1v14M8 1c-4 3-4 11 0 14M8 1c4 3 4 11 0 14M2.200 4.300h11.600M2.200 11.700h11.600" fill="none" stroke="#8e8e8e" stroke-width="1"/>
    <path d="M12 8.500h5.500l3.500 3.500v7h-9z" fill="#323232" stroke="#b8b8b8" stroke-width="1.400" stroke-linejoin="round"/><path d="M17.300 8.800v3.400h3.400" fill="none" stroke="#b8b8b8" stroke-width="1.200"/>
  </svg>
  <div class="t" style="left:979.500px;top:360.5px;font-size:16px;line-height:22px;height:22px">将 <span class="dl">PDF</span> 文件联机转换为 <span class="dl">Word</span></div>
  <div class="t" style="left:979.500px;top:382.5px;font-size:16px;line-height:22px;height:22px">或 <span class="dl">Excel</span></div>
  <div class="abs" style="left:980px;top:434px;width:242px;height:38px;border-radius:19px;background:#2680eb"></div>
  <div class="t" style="left:980px;width:242px;text-align:center;top:442.4px;font-size:20.300px;line-height:24px;height:24px">了解更多信息</div>
  <!-- edit icon -->
  <svg style="left:992px;top:516px" width="29" height="28" viewBox="0 0 29 28">
    <rect x="1.200" y="1.200" width="25.600" height="10.600" rx="1.500" fill="none" stroke="#ea6cb2" stroke-width="2.700"/>
    <rect x="1.200" y="16.200" width="11.600" height="10" rx="1.500" fill="none" stroke="#ea6cb2" stroke-width="2.700"/>
    <path d="M17.500 17h10.500M17.500 21.200h10.500M17.500 25.400h10.500" stroke="#ea6cb2" stroke-width="1.800"/>
  </svg>
  <div class="t big" style="left:1033.500px;top:518.600px">编辑 <span class="bl">PDF</span></div>
  <!-- create icon -->
  <svg style="left:993px;top:572px" width="29" height="29" viewBox="0 0 29 29">
    <path d="M13 26H3.600c-1.100 0-2-.9-2-2V3.600c0-1.100.9-2 2-2h10.600l6.600 6.600v6.300" fill="none" stroke="#f27983" stroke-width="2.500" stroke-linejoin="round"/>
    <g transform="translate(-.5 5.500) scale(1.250)"><path d="M7.800 3.200c.9 0 1 1.300.5 2.900.5 1.200 1.400 2.100 2.400 2.600 1.300-.1 2.400.1 2.400.8 0 .8-1.300.8-2.600 0-1.300.1-2.600.5-3.700 1-.8 1.400-1.700 2.400-2.400 2-.7-.5.100-1.500 1.700-2.300.6-1.100 1.100-2.400 1.400-3.600-.5-1.500-.5-3.400.3-3.400z" fill="none" stroke="#f27983" stroke-width="1.050" stroke-linejoin="round"/></g>
    <circle cx="21" cy="21" r="7.600" fill="#f27983"/>
    <path d="M16.800 21h8.400M21 16.800v8.400" fill="none" stroke="#fff" stroke-width="2.300"/>
  </svg>
  <div class="t big" style="left:1033.500px;top:574.700px">创建 <span class="bl">PDF</span></div>
  <svg style="left:1196px;top:581px" width="16" height="10" viewBox="0 0 16 10"><path d="M1.500 1.500L8 8l6.500-6.500" fill="none" stroke="#fff" stroke-width="2.900"/></svg>

</div>
<svg style="left:0;top:0" width="1242" height="977" viewBox="0 0 1242 977"><rect x="206.350" y="177.350" width="292" height="174.800" rx="4.500" fill="none" stroke="#fa1e12" stroke-width="4.700"/><rect x="104.850" y="683.650" width="818.700" height="289.900" rx="4" fill="none" stroke="#fa1e12" stroke-width="4.700"/></svg>
</body>
</html>
